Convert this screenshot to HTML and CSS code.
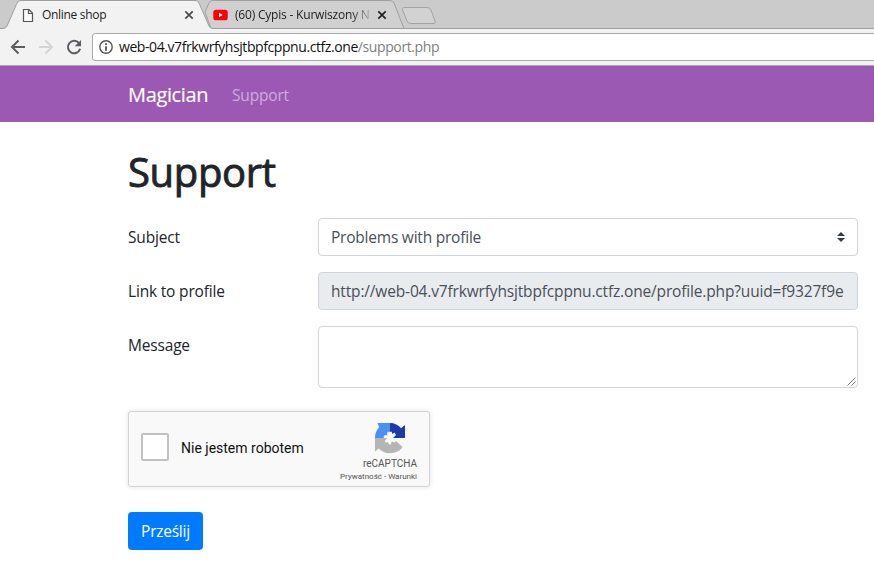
FILE: index.html
```html
<!DOCTYPE html>
<html lang="pl">
<head>
<meta charset="utf-8">
<title>Online shop</title>
<link rel="stylesheet" href="styles.css">
</head>
<body>
<header class="browser">
  <div class="tabs">
    <svg class="tab-shapes" width="874" height="29" viewBox="0 0 874 29">
      <path d="M0 28.5H874" stroke="#a3a3a3"/>
      <path d="M205 12L209 3Q210 .5 213 .5H390Q393 .5 394 3L404 28.5H211Z" fill="#d0d0d0" stroke="#a0a0a0"/>
      <path d="M0 29V28.5H3Q6 28.5 7 26L17 3Q18 .5 21 .5H196Q198 .5 199 3L209 26Q210 28.5 213 28.5V29Z" fill="#f2f2f2"/>
      <path d="M0 28.5H3Q6 28.5 7 26L17 3Q18 .5 21 .5H196Q198 .5 199 3L209 26Q210 28.5 213 28.5" fill="none" stroke="#a0a0a0"/>
      <path d="M405 7.5H427Q430 7.5 431 10L435 21Q436 23.500 433 23.500H411Q408 23.500 407 21L402.500 10Q401.500 7.500 405 7.500Z" fill="#d2d2d2" stroke="#a3a3a3"/>
    </svg>
    <div class="tab tab-shop">
      <svg width="12" height="15" viewBox="0 0 12 15"><path d="M1.500 1.500H7L10.500 5V13.500H1.500ZM6.500 1.500V5.500H10.500" fill="#f8f8f8" stroke="#555" stroke-width="1.200"/></svg>
      <span class="tab-title">Online shop</span>
      <svg class="close" width="10" height="10" viewBox="0 0 10 10"><path d="M1.300 1.300L8.700 8.700M8.700 1.300L1.300 8.700"/></svg>
    </div>
    <div class="tab tab-video">
      <svg width="15" height="12" viewBox="0 0 15 12"><rect x=".3" y=".7" width="14.400" height="10.600" rx="2.600" fill="#f00"/><path d="M6 3.800V8.200L9.700 6Z" fill="#fff"/></svg>
      <span class="tab-title fade">(60) Cypis - Kurwiszony N</span>
      <svg class="close dark" width="10" height="10" viewBox="0 0 10 10"><path d="M1.300 1.300L8.700 8.700M8.700 1.300L1.300 8.700"/></svg>
    </div>
  </div>
  <div class="toolbar">
    <svg class="nav-icons" width="92" height="36" viewBox="0 29 92 36" fill="none" stroke-width="2">
      <path d="M25 47H12M18.500 40.500L12 47L18.500 53.500" stroke="#5a5d61"/>
      <path d="M39 47H52M45.500 40.500L52 47L45.500 53.500" stroke="#d3d4d6"/>
      <path d="M79 43.200A6.200 6.200 0 1 0 80.100 48.800" stroke="#5a5d61"/>
      <path d="M81 40V46.200H74.700Z" fill="#5a5d61"/>
    </svg>
    <div class="address">
      <svg width="14" height="14" viewBox="0 0 14 14"><circle cx="7" cy="7" r="6.200" fill="none" stroke="#555" stroke-width="1.400"/><path d="M7 3.200V5M7 6.200V10.800" stroke="#444" stroke-width="1.700"/></svg>
      <span class="host">web-04.v7frkwrfyhsjtbpfcppnu.ctfz.one</span><span class="path">/support.php</span>
    </div>
  </div>
</header>
<nav class="navbar">
  <a class="brand">Magician</a>
  <a class="nav-link">Support</a>
</nav>
<main>
  <h1>Support</h1>
  <form>
    <div class="row">
      <label>Subject</label>
      <div class="control">
        <span class="subject">Problems with profile</span>
        <svg width="8" height="10" viewBox="0 0 8 10"><path d="M4 0L8 4H0ZM4 10L0 6H8Z" fill="#343a40"/></svg>
      </div>
    </div>
    <div class="row">
      <label class="link-label">Link to profile</label>
      <div class="control readonly"><span class="url">http://web-04.v7frkwrfyhsjtbpfcppnu.ctfz.one/profile.php?uuid=f9327f9e</span></div>
    </div>
    <div class="row">
      <label class="message-label">Message</label>
      <div class="control message"><svg width="9" height="9" viewBox="0 0 9 9"><path d="M.5 8.500L8.500 .5M4.500 8.500L8.500 4.500" stroke="#666" stroke-width=".9"/></svg></div>
    </div>
    <div class="captcha">
      <span class="checkbox"></span>
      <span class="robot">Nie jestem robotem</span>
      <div class="captcha-brand">
        <svg width="32" height="32" viewBox="0 0 32 32">
          <path d="M16 1V10L14.500 9.500L13 11L13.500 13.500L11 13L9.500 14.500L10 16H1C1 11.500 2.500 8 5.200 5.200L3.500 1Z" fill="#4a90f3"/>
          <path d="M16 1C20.500 1 24.500 3 27 6.200L31 3V16H19L22 13L20.500 10.500L18.500 12L17.500 9.500L16 10Z" fill="#1c3aa9"/>
          <path d="M1 16H13.500L10.800 18.800L12 21L14 19.800L15 22.500L17 22.300L17.500 19.500L20.500 20.500L22 19L28.500 25C26 29 21.500 31.200 16 31.200C11.500 31.200 7.500 29.500 4.800 26.500L1 29.500Z" fill="#b5b5b5"/>
        </svg>
        <span class="captcha-name">reCAPTCHA</span>
        <span class="terms">Prywatność - Warunki</span>
      </div>
    </div>
    <button type="button">Prześlij</button>
  </form>
</main>
</body>
</html>
```
FILE: styles.css
```css
* { box-sizing: border-box; }
body {
  margin: 0;
  overflow: hidden;
  background: #fff;
  color: #212529;
  font: 15.500px/24px "Open Sans", "Noto Sans", sans-serif;
  letter-spacing: -.18px;
}
svg { display: block; flex: none; }
.browser { height: 66px; overflow: hidden; }
.tabs { position: relative; display: flex; height: 29px; background: #cbcbcb; }
.tab-shapes { position: absolute; inset: 0; }
.tab {
  position: relative;
  display: flex;
  align-items: center;
  height: 29px;
  padding-top: 1px;
  font-size: 12px;
  line-height: 18px;
  color: #222;
}
.tab-shop { width: 213px; padding-left: 22px; gap: 8px; }
.tab-video { width: 174px; gap: 7px; letter-spacing: -.2px; }
.tab-title { white-space: nowrap; }
.tab-shop .tab-title { letter-spacing: -.3px; }
.close { margin-left: auto; stroke: #4a4a4a; stroke-width: 1.700; }
.tab-shop .close { margin-right: 19px; }
.dark { margin-left: -2px; stroke: #222; }
.fade {
  width: 140px;
  -webkit-mask-image: linear-gradient(90deg, #000 115px, transparent 140px);
  mask-image: linear-gradient(90deg, #000 115px, transparent 140px);
}
.toolbar { display: flex; height: 37px; background: #f2f2f2; border-bottom: 1px solid #a9a9a9; }
.address {
  display: flex;
  align-items: center;
  width: 800px;
  flex: none;
  height: 28px;
  margin-top: 4px;
  padding-left: 6px;
  background: #fff;
  border: 1px solid #a9a9a9;
  border-radius: 3px;
  font-size: 14px;
  line-height: 20px;
  color: #111;
}
.host { margin-left: 6px; letter-spacing: -.42px; }
.path { color: #808080; letter-spacing: -.4px; }
.navbar {
  display: flex;
  align-items: center;
  gap: 24px;
  height: 56px;
  padding: 1px 128px 0;
  background: #9b59b4;
}
.brand {
  width: 80px;
  font-size: 20px;
  color: #fff;
  letter-spacing: -.35px;
  white-space: nowrap;
  -webkit-text-stroke: .15px #fff;
}
.nav-link { color: rgba(255, 255, 255, .5); }
main { padding: 26px 16px 0 128px; }
h1 {
  margin: 0 0 22px;
  font-size: 40px;
  line-height: 48px;
  font-weight: 500;
  letter-spacing: -.35px;
  -webkit-text-stroke: .9px #212529;
}
.row { display: flex; margin-bottom: 16px; }
label { width: 190px; padding-top: 7px; white-space: nowrap; }
.control {
  display: flex;
  align-items: center;
  justify-content: space-between;
  width: 540px;
  height: 38px;
  padding: 0 12px;
  border: 1px solid #ced4da;
  border-radius: 4px;
  color: #495057;
  white-space: nowrap;
  overflow: hidden;
}
.subject { letter-spacing: -.22px; }
.url { letter-spacing: -.16px; }
.readonly { background: #e9ecef; }
.message { height: 62px; padding: 0 1px 1px 0; align-items: flex-end; justify-content: flex-end; }
.captcha {
  display: flex;
  width: 302px;
  height: 76px;
  margin-top: 23px;
  padding-left: 12px;
  background: #f9f9f9;
  border: 1px solid #d3d3d3;
  border-radius: 3px;
  box-shadow: 0 0 4px 1px rgba(0, 0, 0, .08);
  font-family: Roboto, sans-serif;
  letter-spacing: 0;
}
.checkbox { width: 28px; height: 28px; margin-top: 21px; background: #fff; border: 2px solid #c1c1c1; border-radius: 2px; }
.robot { margin: 24px 0 0 12px; font-size: 14px; color: #111; }
.captcha-brand {
  display: flex;
  flex-direction: column;
  align-items: flex-end;
  margin: 10px 12px 0 auto;
  color: #555;
}
.captcha-brand svg { margin-right: 11px; }
.captcha-name { font-size: 10px; line-height: 12px; margin-top: 4px; }
.terms { font-size: 8px; line-height: 10px; margin-top: 2px; white-space: nowrap; }
button {
  display: block;
  width: 75px;
  height: 38px;
  margin-top: 25px;
  padding: 0;
  border: 0;
  border-radius: 4px;
  background: #007bff;
  color: #fff;
  font: inherit;
  letter-spacing: -.25px;
}
```
